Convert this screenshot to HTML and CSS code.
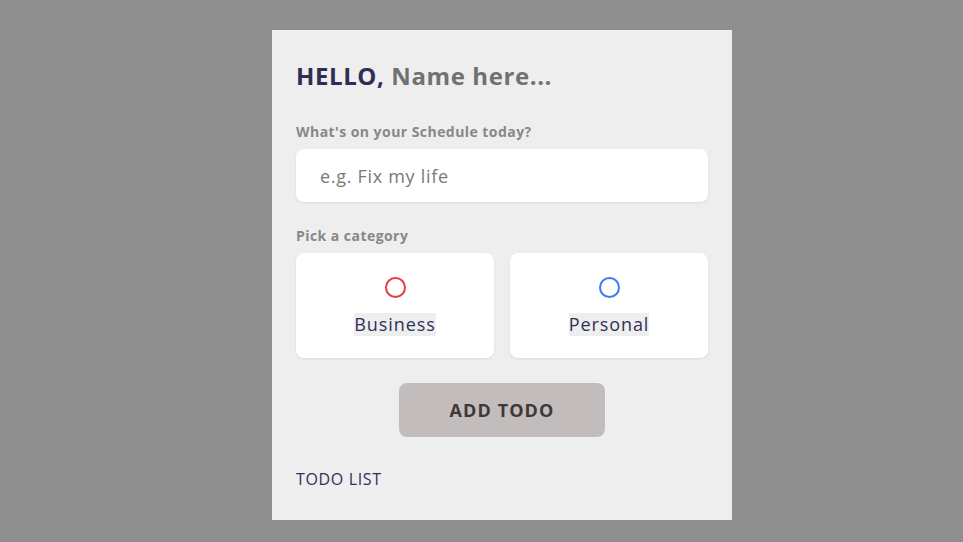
FILE: index.html
```html
<!DOCTYPE html>
<html>
<head>
<meta charset="utf-8">
<link rel="stylesheet" href="styles.css">
</head>
<body>
<main class="app">
  <section class="greeting">
    <h2 class="title">HELLO, <span class="name">Name here...</span></h2>
  </section>
  <section class="create">
    <h4 class="label">What's on your Schedule today?</h4>
    <input class="text-input" type="text" placeholder="e.g. Fix my life">
    <h4 class="label">Pick a category</h4>
    <div class="options">
      <label class="option">
        <span class="bubble business"></span>
        <span class="option-text">Business</span>
      </label>
      <label class="option">
        <span class="bubble personal"></span>
        <span class="option-text">Personal</span>
      </label>
    </div>
    <div class="actions"><button class="add-btn" type="button">ADD TODO</button></div>
  </section>
  <section class="list">
    <h3 class="list-title">TODO LIST</h3>
  </section>
</main>
</body>
</html>
```
FILE: styles.css
```css
* { box-sizing: border-box; }
html, body { margin: 0; height: 100%; }
body {
  background: #8f8f8f;
  font-family: "Open Sans", "Liberation Sans", sans-serif;
  display: flex;
  justify-content: center;
  padding: 30px 0 0 41px;
}
.app {
  width: 460px;
  height: 490px;
  background: #eeeeee;
  padding: 24px;
}
.title {
  margin: 0;
  padding-top: 6px;
  font-size: 24px;
  font-weight: 700;
  color: #312d52;
  line-height: 32px;
  letter-spacing: 0.6px;
}
.name { color: #717171; }
.label {
  margin: 0;
  font-size: 14px;
  font-weight: 700;
  color: #888888;
  line-height: 18px;
  letter-spacing: 0.45px;
}
.create { margin-top: 31px; }
.text-input {
  display: block;
  width: 100%;
  height: 53px;
  margin-top: 8px;
  border: none;
  border-radius: 8px;
  background: #fff;
  padding: 0 24px;
  font-family: inherit;
  font-size: 18px;
  letter-spacing: 0.7px;
  box-shadow: 0 1px 3px rgba(0,0,0,0.08);
  outline: none;
}
.text-input::placeholder { color: #7a7a7a; }
.create .label:nth-of-type(2) { margin-top: 25px; }
.options {
  display: grid;
  grid-template-columns: 1fr 1fr;
  gap: 16px;
  margin-top: 8px;
}
.option {
  height: 105px;
  background: #fff;
  border-radius: 8px;
  box-shadow: 0 1px 3px rgba(0,0,0,0.08);
  display: flex;
  flex-direction: column;
  align-items: center;
  padding-top: 24px;
}
.bubble {
  width: 21px;
  height: 21px;
  border-radius: 50%;
  border: 2px solid;
}
.business { border-color: #e83a4a; }
.personal { border-color: #3a7cf5; }
.option-text {
  margin-top: 15px;
  font-size: 18px;
  letter-spacing: 0.9px;
  color: #2f3157;
  background: #eeeeee;
  line-height: 23px;
}
.actions {
  display: flex;
  justify-content: center;
  margin-top: 25px;
}
.add-btn {
  width: 206px;
  height: 54px;
  border: none;
  border-radius: 8px;
  background: #c2bcbc;
  font-family: inherit;
  font-size: 18px;
  letter-spacing: 1.1px;
  font-weight: 700;
  color: #3e3838;
}
.list-title {
  margin: 31px 0 0;
  font-size: 16px;
  font-weight: 400;
  letter-spacing: 0.65px;
  color: #2f3157;
  line-height: 22px;
}
```
